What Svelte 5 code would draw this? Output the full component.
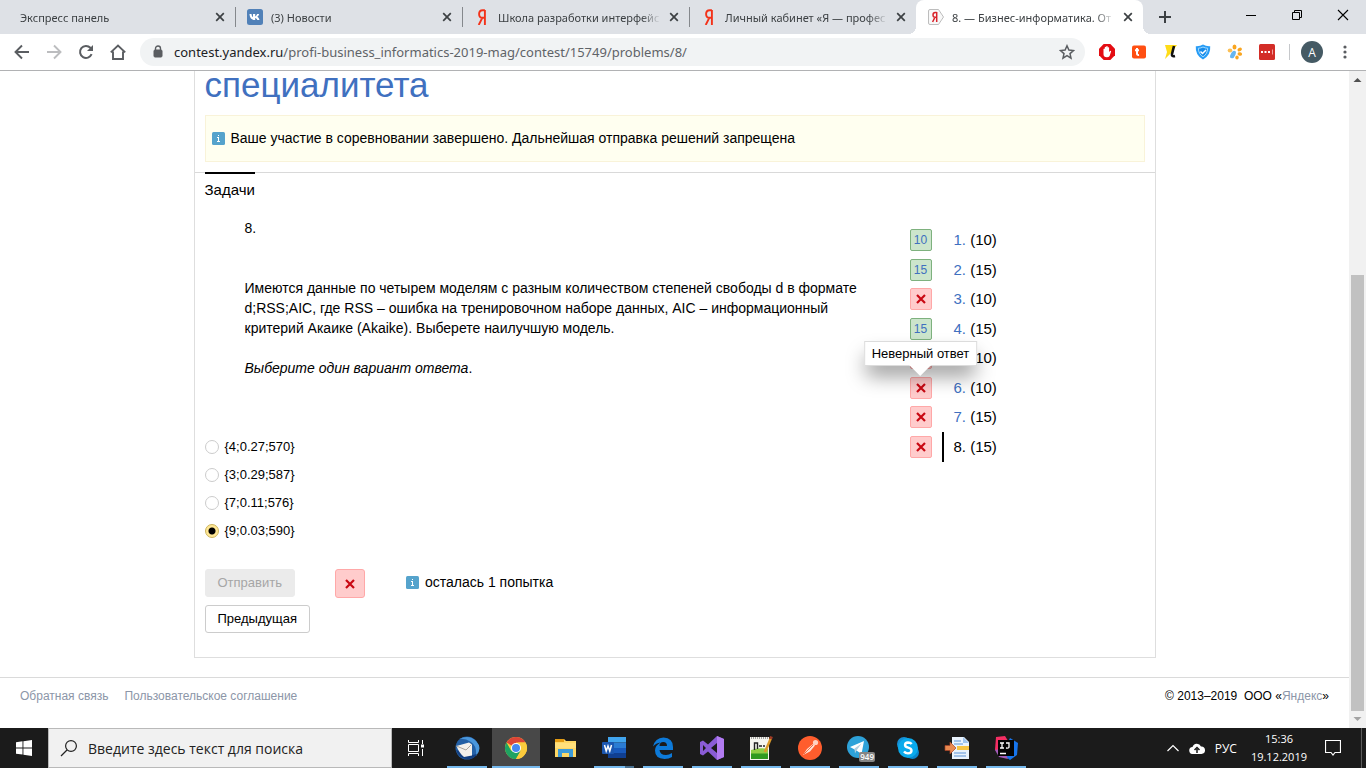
<script>
  const tabs = [
    { title: 'Экспресс панель', icon: null },
    { title: '(3) Новости', icon: 'vk' },
    { title: 'Школа разработки интерфейс', icon: 'ya' },
    { title: 'Личный кабинет «Я — профес', icon: 'ya' },
    { title: '8. — Бизнес-информатика. От', icon: 'contest', active: true }
  ];
  const problems = [
    { n: 1, points: 10, ok: true },
    { n: 2, points: 15, ok: true },
    { n: 3, points: 10, ok: false },
    { n: 4, points: 15, ok: true },
    { n: 5, points: 10, ok: false },
    { n: 6, points: 10, ok: false, tip: 'Неверный ответ' },
    { n: 7, points: 15, ok: false },
    { n: 8, points: 15, ok: false, current: true }
  ];
  const answers = ['{4;0.27;570}', '{3;0.29;587}', '{7;0.11;576}', '{9;0.03;590}'];
  let chosen = $state(3);
  const apps = [
    { id: 'mail', label: 'Thunderbird', open: true },
    { id: 'chrome', label: 'Chrome', open: true, active: true },
    { id: 'files', label: 'Проводник' },
    { id: 'word', label: 'Word', open: true, many: true },
    { id: 'edge', label: 'Edge', open: true },
    { id: 'vs', label: 'Visual Studio', open: true },
    { id: 'npp', label: 'Notepad++', open: true },
    { id: 'postman', label: 'Postman', open: true },
    { id: 'telegram', label: 'Telegram', open: true },
    { id: 'skype', label: 'Skype', open: true },
    { id: 'export', label: 'Импорт', open: true },
    { id: 'idea', label: 'IntelliJ IDEA', open: true }
  ];
</script>

{#snippet cross()}
  <svg class="cross" width="10" height="10" viewBox="0 0 10 10" aria-hidden="true"><path d="M1 1l8 8M9 1L1 9" stroke="#c90813" stroke-width="2.2" /></svg>
{/snippet}

{#snippet info()}
  <svg class="info" width="13" height="13" viewBox="0 0 13 13" aria-hidden="true"><rect width="13" height="13" rx="1.500" fill="#55a3cc" /><path d="M6 3h1v1H6zM5 5h2v4h1v1H5V9h1V6H5z" fill="#fff" /></svg>
{/snippet}

<div class="screen">
  <header>
    <div class="strip">
      {#each tabs as tab}
        <div class="tab" class:active={tab.active}>
          {#if tab.icon === 'vk'}
            <svg width="16" height="16" viewBox="0 0 16 16"><rect width="16" height="16" rx="2.500" fill="#5181b8" /><path d="M2.500 5h2c.2 2 .9 2.800 1.500 3.100V5h2.200v2.400C9 7.200 9.700 6.300 10 5h2.100c-.3 1.400-1.100 2.300-1.800 2.800.8.500 1.700 1.300 2.200 3.200h-2.200c-.4-1.100-1-1.800-2.100-2v2h-.6C4.600 11 2.700 8.800 2.500 5z" fill="#fff" /></svg>
          {:else if tab.icon === 'ya'}
            <svg width="16" height="16" viewBox="0 0 16 16"><path d="M10.900 1v15M10.900 1.200H8.700C6.300 1.200 5.100 2.800 5.100 5s1.200 3.800 3.400 3.800h2.400M8.300 8.800L4.700 16" fill="none" stroke="#f33219" stroke-width="1.900" /></svg>
          {:else if tab.icon === 'contest'}
            <svg width="16" height="16" viewBox="0 0 16 16"><path d="M2 .5h8.500L15.500 8l-5 7.500H2A1.500 1.500 0 0 1 .5 14V2A1.500 1.500 0 0 1 2 .5z" fill="#f8f8f8" stroke="#bdbdbd" /><path d="M8.700 3v10M8.700 3.600H7.300C5.700 3.600 5 4.600 5 5.900c0 1.500.8 2.300 2.100 2.300h1.600M7 8.200L4.600 13" fill="none" stroke="#d9232b" stroke-width="1.500" /></svg>
          {/if}
          <span class="title">{tab.title}</span>
          <button class="bare close" aria-label="Закрыть вкладку"><svg width="10" height="10" viewBox="0 0 10 10"><path d="M1.200 1.200l7.600 7.600M8.800 1.200L1.200 8.800" stroke="#3c4043" stroke-width="1.700" /></svg></button>
        </div>
      {/each}
      <button class="bare plus" aria-label="Новая вкладка"><svg width="14" height="14" viewBox="0 0 14 14"><path d="M7 1v12M1 7h12" stroke="#3c4043" stroke-width="2" /></svg></button>
      <div class="window">
        <button class="bare" aria-label="Свернуть"><svg width="12" height="12" viewBox="0 0 12 12"><path d="M1 6.500h10" stroke="#000" /></svg></button>
        <button class="bare" aria-label="Развернуть"><svg width="12" height="12" viewBox="0 0 12 12"><path d="M1.500 3.500h7v7h-7zM3.500 3.500v-2h7v7h-2" fill="none" stroke="#000" /></svg></button>
        <button class="bare" aria-label="Закрыть"><svg width="12" height="12" viewBox="0 0 12 12"><path d="M1 1l10 10M11 1L1 11" stroke="#000" stroke-width="1.100" /></svg></button>
      </div>
    </div>
    <div class="toolbar">
      <nav class="nav">
        <button class="bare" aria-label="Назад"><svg width="16" height="16" viewBox="0 0 16 16"><path d="M15 8H2M8 1.500L1.500 8 8 14.500" fill="none" stroke="#5a5d61" stroke-width="1.900" /></svg></button>
        <button class="bare" aria-label="Вперёд"><svg width="16" height="16" viewBox="0 0 16 16"><path d="M1 8h13M8 1.500L14.500 8 8 14.500" fill="none" stroke="#bcbdbf" stroke-width="1.900" /></svg></button>
        <button class="bare" aria-label="Обновить"><svg width="16" height="16" viewBox="0 0 16 16"><path d="M13.600 10.200A6 6 0 1 1 12.400 3.800L14 5.500" fill="none" stroke="#5a5d61" stroke-width="2" /><path d="M15 1v6H9z" fill="#5a5d61" /></svg></button>
        <button class="bare" aria-label="Домой"><svg width="16" height="16" viewBox="0 0 16 16"><path d="M.8 8.400L8 1.500l7.200 6.900M3 7.500V15h10V7.500" fill="none" stroke="#5a5d61" stroke-width="1.900" /></svg></button>
      </nav>
      <div class="address">
        <svg width="10" height="14" viewBox="0 0 10 14"><path d="M2.500 6V3.500a2.500 2.500 0 0 1 5 0V6" fill="none" stroke="#5a5d61" stroke-width="1.400" /><rect x="1" y="5" width="8" height="7" rx="1" fill="#5a5d61" stroke="#5a5d61" /></svg>
        <a class="url" href="#top"><b>contest.yandex.ru</b>/profi-business_informatics-2019-mag/contest/15749/problems/8/</a>
        <button class="bare" aria-label="В закладки"><svg width="16" height="16" viewBox="0 0 16 16"><path d="M8 1.800l1.900 4.300 4.600.4-3.500 3.100 1 4.500L8 11.700l-4 2.400 1-4.500-3.500-3.100 4.600-.4z" fill="none" stroke="#5a5d61" stroke-width="1.500" /></svg></button>
      </div>
      <div class="extensions">
        <svg width="16" height="16" viewBox="0 0 16 16"><path d="M4.700 0h6.600L16 4.700v6.600L11.300 16H4.700L0 11.300V4.700z" fill="#e40d13" /><path d="M4.500 8V5q.7-.8 1.300 0V3.200q.8-.8 1.400 0v-.700q.8-.8 1.500 0v1q.8-.7 1.400 0V8l1.200-1.200q1 0 .8.800L10.600 12q-.8 1.300-2.800 1.300-3.300 0-3.300-3z" fill="#fff" /></svg>
        <svg width="16" height="16" viewBox="0 0 16 16"><rect x="1" y="1.500" width="14" height="13" rx="2" fill="#ff4f12" /><path d="M6 4v5.500q0 1.800 2 1.500M4 6.200h4" fill="none" stroke="#fff" stroke-width="2" /></svg>
        <svg width="16" height="16" viewBox="0 0 16 16"><path d="M2 1h12L8 9l-6 6 2-7z" fill="#ffdc17" /><path d="M11 2L9 10q-.500 3 3 2" fill="none" stroke="#111" stroke-width="2.600" /></svg>
        <svg width="16" height="16" viewBox="0 0 16 16"><path d="M8 .5q3 2 7.200 1.700Q16 11 8 15.500 0 11 .8 2.200 5 2.500 8 .5z" fill="#279cf6" /><path d="M8 3q2 1.200 4.600 1.200Q12.500 10 8 12.800 3.500 10 3.400 4.200 6 4.200 8 3z" fill="#178bea" stroke="#a3dcff" /><path d="M5.500 7.500l2 2 3.500-3.500" fill="none" stroke="#fff" stroke-width="1.500" /></svg>
        <svg width="16" height="16" viewBox="0 0 16 16"><g fill="#f9a51f"><ellipse cx="7.500" cy="3" rx="2" ry="2.600" /><ellipse cx="12.700" cy="5.500" rx="2.300" ry="1.800" transform="rotate(-30 12.700 5.500)" /><ellipse cx="12.800" cy="10" rx="2.300" ry="1.700" transform="rotate(15 12.800 10)" /><ellipse cx="10" cy="13.500" rx="1.700" ry="2" /></g><ellipse cx="3" cy="6.500" rx="2.300" ry="1.900" fill="#fbbf54" /><path d="M6 7q3-1 3 1.500T6.500 14Q2.500 15 3 12t3-5z" fill="#66b5ef" /></svg>
        <svg width="16" height="16" viewBox="0 0 16 16"><rect width="16" height="16" rx="1.500" fill="#d32d27" /><path d="M2 7h2v2H2zM5.500 7h2v2h-2zM9 7h2v2H9z" fill="#fff" /><path d="M13.500 5.500v5" stroke="#f2a19e" /></svg>
      </div>
      <span class="rule"></span>
      <button class="bare avatar" aria-label="Профиль">A</button>
      <button class="bare menu" aria-label="Меню"><svg width="4" height="14" viewBox="0 0 4 14" fill="#5a5d61"><circle cx="2" cy="2" r="1.600" /><circle cx="2" cy="7" r="1.600" /><circle cx="2" cy="12" r="1.600" /></svg></button>
    </div>
  </header>

  <div class="view">
    <div class="page">
      <main>
        <h1>специалитета</h1>
        <p class="notice">{@render info()}Ваше участие в соревновании завершено. Дальнейшая отправка решений запрещена</p>
        <nav class="sections"><a href="#tasks">Задачи</a></nav>
        <div class="columns">
          <section class="problem">
            <div class="statement">
              <h2>8.</h2>
              <p>Имеются данные по четырем моделям с разным количеством степеней свободы d в формате d;RSS;AIC, где RSS – ошибка на тренировочном наборе данных, AIC – информационный критерий Акаике (Akaike). Выберете наилучшую модель.</p>
              <p><em>Выберите один вариант ответа</em>.</p>
            </div>
            <form onsubmit={(e) => e.preventDefault()}>
              <div class="answers">
                {#each answers as answer, i}
                  <label><input type="radio" name="answer" value={i} bind:group={chosen} />{answer}</label>
                {/each}
              </div>
              <div class="submit">
                <button class="btn" disabled>Отправить</button>
                <span class="badge bad large">{@render cross()}</span>
                <span class="left">{@render info()}осталась 1 попытка</span>
              </div>
              <button class="btn" type="button">Предыдущая</button>
            </form>
          </section>
          <ul class="tasks">
            {#each problems as p}
              <li class:current={p.current}>
                <span class="badge" class:bad={!p.ok}>
                  {#if p.ok}<a href="#s{p.n}">{p.points}</a>{:else}{@render cross()}{/if}
                  {#if p.tip}<span class="tip" role="tooltip">{p.tip}</span>{/if}
                </span>
                <span class="name">{#if p.current}<span>{p.n}.</span>{:else}<a href="#p{p.n}">{p.n}.</a>{/if} ({p.points})</span>
              </li>
            {/each}
          </ul>
        </div>
      </main>
      <footer>
        <a href="#feedback">Обратная связь</a>
        <a href="#terms">Пользовательское соглашение</a>
        <span class="copy">© 2013–2019&nbsp; ООО «<a href="#ya">Яндекс</a>»</span>
      </footer>
    </div>
    <div class="scroll">
      <svg width="17" height="17" viewBox="0 0 17 17"><path d="M4.500 11h8l-4-4z" fill="#505050" /></svg>
      <div class="track"><div class="thumb"></div></div>
      <svg width="17" height="17" viewBox="0 0 17 17"><path d="M4.500 6h8l-4 4z" fill="#a3a3a3" /></svg>
    </div>
  </div>

  <div class="taskbar">
    <button class="bare start" aria-label="Пуск"><svg width="16" height="16" viewBox="0 0 16 16" fill="#fff"><path d="M0 2.200l6.500-.9v6.200H0zM7.400 1.200L16 0v7.500H7.400zM0 8.400h6.500v6.200L0 13.700zM7.400 8.400H16V16l-8.600-1.200z" /></svg></button>
    <label class="search">
      <svg width="18" height="18" viewBox="0 0 18 18"><circle cx="11" cy="7" r="5.400" fill="none" stroke="#222" stroke-width="1.200" /><path d="M7 11L1 17" stroke="#222" stroke-width="1.300" /></svg>
      <input type="text" aria-label="Поиск" placeholder="Введите здесь текст для поиска" />
    </label>
    <button class="bare start" aria-label="Представление задач"><svg width="18" height="16" viewBox="0 0 18 16"><path d="M1.500 0v2.500h10V0M1.500 16v-2.500h10V16M1.500 4.500h10v7h-10zM15.500 0v4M15.500 9v7" fill="none" stroke="#fff" /><path d="M14 4.500h3v3h-3z" fill="#fff" /></svg></button>
    <div class="apps">
      {#each apps as app}
        <button class="bare app" class:open={app.open} class:active={app.active} class:many={app.many} aria-label={app.label}>
          <svg width="26" height="26" viewBox="0 0 26 26">
            {#if app.id === 'mail'}
              <circle cx="13" cy="13" r="11.500" fill="#2460a5" /><path d="M5 4Q15-1 22 6t0 15q1-10-5-14T5 4z" fill="#4a97dc" /><path d="M2 15q3 9 12 9 7 0 9-5-9 3-12-2z" fill="#123e80" /><path d="M2.500 11L15 7.500l3 2v11l-8 1.500Q5 18 2.500 11z" fill="#f4f1ec" /><path d="M2.500 11l9.500 4 5.500-5.500" fill="none" stroke="#aaa49c" />
            {:else if app.id === 'chrome'}
              <circle cx="13" cy="13" r="11" fill="#fccb3c" /><path d="M13 13L3.470 7.500A11 11 0 0 1 22.530 7.500H13z" fill="#dc4437" /><path d="M3.470 7.500A11 11 0 0 0 13 24l4.760-8.250L8.240 15.750z" fill="#1ea362" /><path d="M22.530 7.500A11 11 0 0 1 13 24l4.760-8.250L15 7.500z" fill="#fccb3c" /><circle cx="13" cy="13" r="5" fill="#fff" /><circle cx="13" cy="13" r="4" fill="#4688f1" />
            {:else if app.id === 'files'}
              <path d="M3 4h9l2 2h10v16H3z" fill="#fdd765" /><path d="M3 4h9v3H3z" fill="#e49b12" /><path d="M3 8h21v5H3z" fill="#ffe07b" /><path d="M6 22v-8h15v8h-4v-4h-7v4z" fill="#3c9bd9" />
            {:else if app.id === 'word'}
              <path d="M7 2h18v5.500H7z" fill="#41a5ee" /><path d="M7 7.500h18V13H7z" fill="#2b7cd3" /><path d="M7 13h18v5H7z" fill="#185abd" /><path d="M7 18h18v5H7z" fill="#103f91" /><rect x="1" y="7" width="12" height="12" rx="1" fill="#1c57b0" /><path d="M3.500 10l1.700 6L7 11l1.800 5 1.700-6" fill="none" stroke="#fff" stroke-width="1.500" />
            {:else if app.id === 'edge'}
              <path d="M3 11.500Q5 3 13.500 2.500 23 3 23 12v3H9.500q.5 5 6.500 5 3 0 6-2v4q-3 2-7.500 2Q5 23.500 5 15.500q0-5 5.500-8Q6 8 3 11.500zM9.500 11H17q0-4-3.700-4T9.500 11z" fill="#0d7ad9" />
            {:else if app.id === 'vs'}
              <path d="M18 1l7 3v18l-7 3L9 16.500 4 20.500 1 19V7l3-1.500 5 4zM4 10v6l3-3zM18 8l-6 5 6 5z" fill="#8a5cd6" fill-rule="evenodd" /><path d="M18 1l7 3v18l-7 3z" fill="#b37cf2" />
            {:else if app.id === 'npp'}
              <path d="M2 2h19v23H2z" fill="#f5f5ef" /><path d="M3 15q8-3 17-1v10H3z" fill="#8fce45" /><path d="M3 18.500h17V24H3z" fill="#2f9a20" /><path d="M3 3h17" stroke="#8a8a8a" stroke-dasharray="1 1" stroke-width="1.500" /><path d="M6.500 15V8h3v6M11 11h3m1 0h2" fill="none" stroke="#222" stroke-width="1.400" /><path d="M23 3L17 17" stroke="#db9a29" stroke-width="2.500" /><path d="M23.500 1.500l-1 2.500" stroke="#9e3b26" stroke-width="3" />
            {:else if app.id === 'postman'}
              <circle cx="13" cy="13" r="12" fill="#ff5d2d" /><path d="M6 20l4-6 6-5 2 1.500-5 6z" fill="#ffe1d6" /><circle cx="18.500" cy="7.500" r="2.600" fill="#ffd2c2" /><path d="M7 19l9-9" stroke="#ed6f48" />
            {:else if app.id === 'telegram'}
              <circle cx="12" cy="12" r="11" fill="#2ea2d9" /><path d="M4 12l14-6-2.500 13-5-3.500z" fill="#fff" /><path d="M8.500 13.500l7-5-5 7-1.500 3z" fill="#b4cfdf" />
            {:else if app.id === 'skype'}
              <circle cx="9" cy="9" r="7" fill="#1590d6" /><circle cx="17.500" cy="17.500" r="6.500" fill="#0a87cd" /><circle cx="13" cy="13" r="10" fill="#0aaaec" /><path d="M16.700 9Q15.500 7.500 13 7.500q-3 .2-3 2.600 0 1.900 3.200 2.600 3.300.8 3.300 3 0 2.500-3.500 2.700-2.500 0-4-1.900" fill="none" stroke="#fff" stroke-width="2.400" />
            {:else if app.id === 'export'}
              <path d="M8 2h12l5 5v17H8z" fill="#e9f3fd" /><path d="M19 2v6h6" fill="#9fc5ee" /><path d="M10 6h7M10 9h9M10 18h12M10 21h12" stroke="#8ab4e3" stroke-width="1.500" /><path d="M13 11h12v4H13z" fill="#f6c443" /><path d="M1 10.500h5V7l6 6-6 6v-3.500H1z" fill="#e98a51" stroke="#a94326" stroke-width=".7" />
            {:else}
              <path d="M3 2l9-1 5 8-7 9-8-3z" fill="#f42e63" /><path d="M17 3l8 5-1 12-7 5-8-6z" fill="#1775ec" /><path d="M2 15l8-2 5 11-9-2z" fill="#a45bb9" /><rect x="5" y="5" width="16" height="16" fill="#050505" /><path d="M7 8h4M9 8v5M7 13h4M13 8h3v4q0 1.500-3 1M7 18.500h6" fill="none" stroke="#fff" stroke-width="1.300" />
            {/if}
          </svg>
          {#if app.id === 'telegram'}<span class="count">949</span>{/if}
        </button>
      {/each}
    </div>
    <div class="tray">
      <svg width="12" height="8" viewBox="0 0 12 8"><path d="M.5 7L6 1.500 11.500 7" fill="none" stroke="#fff" stroke-width="1.200" /></svg>
      <svg width="16" height="11" viewBox="0 0 16 11"><path d="M4 11a3.500 3.500 0 0 1-.5-7 4.500 4.500 0 0 1 8.500-.5A3.700 3.700 0 0 1 12.500 11z" fill="#fff" /><path d="M8 10V6M5.500 7L8 4.500 10.500 7" fill="none" stroke="#1b1b1b" stroke-width="1.500" /></svg>
      <span>РУС</span>
      <time>15:36<br />19.12.2019</time>
      <svg width="16" height="16" viewBox="0 0 16 16"><path d="M.5.500h15v12H10L8 15l-2-2.500H.5z" fill="none" stroke="#fff" stroke-width="1.200" /></svg>
    </div>
    <button class="bare desktop" aria-label="Показать рабочий стол"></button>
  </div>
</div>

<style>
  :global(body) { margin: 0; background: #fff; }
  .screen { min-height: 100vh; display: flex; flex-direction: column; font-family: "Liberation Sans", Arial, sans-serif; color: #000; }
  svg { display: block; flex: none; }
  a { color: #4070bf; text-decoration: none; }
  p, h1, h2, ul { margin: 0; padding: 0; font-weight: normal; }
  .bare { border: 0; padding: 0; background: none; font: inherit; color: inherit; display: flex; align-items: center; justify-content: center; }

  header, .taskbar { font-family: "Open Sans", "Noto Sans", sans-serif; }
  header { border-bottom: 1px solid #b1b2b4; }
  .strip { display: flex; height: 34px; background: #dee1e6; padding-left: 8px; }
  .tab { position: relative; box-sizing: border-box; flex: 0 1 227px; min-width: 0; display: flex; align-items: center; gap: 8px; padding: 0 10px 0 12px; font-family: "Noto Sans", sans-serif; font-size: 11px; color: #3c4043; }
  .tab:not(.active):not(:first-child) { background: linear-gradient(#85888c, #85888c) left center / 1px 20px no-repeat; }
  .tab.active { background: #fff; border-radius: 8px 8px 0 0; }
  .tab.active::before, .tab.active::after { content: ""; position: absolute; bottom: 0; width: 8px; height: 8px; }
  .tab.active::before { right: 100%; background: radial-gradient(circle at 0 0, transparent 8px, #fff 8px); }
  .tab.active::after { left: 100%; background: radial-gradient(circle at 100% 0, transparent 8px, #fff 8px); }
  .title { flex: 1; overflow: hidden; white-space: nowrap; -webkit-mask-image: linear-gradient(90deg, #000 calc(100% - 20px), transparent); mask-image: linear-gradient(90deg, #000 calc(100% - 20px), transparent); }
  .plus { padding-left: 15px; }
  .window { display: flex; margin-left: auto; height: 29px; }
  .window button { width: 46px; }
  .toolbar { display: flex; align-items: center; height: 36px; padding: 0 19px 0 14px; }
  .nav { display: flex; gap: 16px; }
  .address { flex: 1; min-width: 0; height: 28px; margin-left: 14px; box-sizing: border-box; padding: 0 10px 0 13px; display: flex; align-items: center; gap: 11px; border-radius: 14px; background: #f1f3f4; }
  .url { flex: 1; overflow: hidden; white-space: nowrap; font-family: "Noto Sans", sans-serif; font-size: 13px; color: #5f6368; }
  .url b { font-weight: normal; color: #202124; }
  .extensions { display: flex; gap: 16px; margin-left: 14px; }
  .rule { width: 1px; height: 16px; background: #c6c8cb; margin: 0 11px 0 14px; }
  .avatar { width: 22px; height: 22px; border-radius: 50%; background: #455a64; color: #fff; font-size: 12px; }
  .menu { margin-left: 20px; }

  .view { flex: 1; display: flex; }
  .page { flex: 1; min-width: 0; }
  main { box-sizing: border-box; max-width: 962px; margin: 0 auto; padding-bottom: 24px; border: solid #dedede; border-width: 0 1px 1px; }
  h1 { padding: 0 10px; font-size: 35px; line-height: 28px; color: #4070bf; }
  .notice { display: flex; align-items: center; gap: 6px; margin: 16px 10px 10px; padding: 12px 6px; border: 1px solid #f9f3d9; background: #fffff0; font-size: 14px; line-height: 21px; }
  .sections { display: flex; padding: 0 10px; border-top: 1px solid #d9d9d9; font-size: 15px; line-height: 20px; }
  .sections a { color: #000; border-top: 2px solid #000; margin-top: -1px; padding-top: 6px; }
  .columns { display: grid; grid-template-columns: minmax(0, 1fr) 235px; padding: 18px 10px 0; }
  .statement { padding: 0 40px; font-size: 14px; line-height: 20px; }
  h2 { font-size: 14px; }
  .statement h2 + p { margin-top: 40px; }
  .statement p + p { margin-top: 20px; }
  .answers { display: grid; justify-items: start; margin: 55px 0 24px; }
  label { display: flex; align-items: center; }
  .answers label { gap: 6px; font-size: 13px; line-height: 28px; }
  input[type="radio"] { appearance: none; box-sizing: border-box; width: 14px; height: 14px; margin: 0; border: 1px solid #ccc; border-radius: 50%; background: #fff; }
  input[type="radio"]:checked { border-color: #ccb35a; background: radial-gradient(circle, #000 3px, #ffe795 4px); }
  .submit { display: flex; margin-bottom: 7px; }
  .btn { box-sizing: border-box; height: 28px; padding: 0 12px 1px; border: 1px solid #ccc; border-radius: 3px; background: #fff; color: #000; font: 13px "Liberation Sans", Arial, sans-serif; }
  .btn:disabled { border-color: #ebebeb; background: #ebebeb; color: #a6a6a6; }
  .badge { position: relative; box-sizing: border-box; width: 22px; height: 22px; display: flex; align-items: center; justify-content: center; border: 1px solid #7eb17e; border-radius: 2px; background: #cce5cc; font-size: 12px; }
  .bad { border-color: #ffa8a8; background: #fcc; }
  .large { width: 30px; height: 29px; border-radius: 3px; margin: 0 41px 0 40px; }
  .left { display: flex; align-items: center; gap: 6px; font-size: 14px; line-height: 26px; height: 26px; }

  .tasks { list-style: none; padding-top: 11px; font-size: 15px; line-height: 22px; }
  li { display: flex; align-items: center; height: 22px; margin-bottom: 7px; }
  li:nth-child(odd) { margin-bottom: 8px; }
  .name { margin-left: 10px; padding-left: 12px; }
  .current .name { padding-left: 10px; border-left: 2px solid #000; line-height: 30px; }
  .tip { position: absolute; left: 50%; bottom: 32px; transform: translateX(-50%); z-index: 2; padding: 0 7px; border: 1px solid #dcdcdc; background: #fff; box-shadow: 0 12px 20px -2px rgba(0, 0, 0, .4); font-size: 13px; line-height: 23px; white-space: nowrap; }
  .tip::after { content: ""; position: absolute; top: 100%; left: 50%; margin-left: -11px; border: 11px solid transparent; border-top-color: #fff; border-bottom: 0; }

  footer { display: flex; gap: 16px; margin-top: 19px; padding: 8px 20px 22px; border-top: 1px solid #dadada; font-size: 12px; line-height: 20px; }
  footer a { color: #8c96a8; }
  .copy { margin-left: auto; }
  .scroll { width: 17px; display: flex; flex-direction: column; background: #f1f1f1; }
  .track { flex: 1; display: flex; flex-direction: column; justify-content: flex-end; padding: 0 2px; }
  .thumb { flex: 0 0 70%; background: #c1c1c1; }

  .taskbar { display: flex; height: 40px; background: #1b1b1b; color: #fff; }
  .start { width: 48px; }
  .search { box-sizing: border-box; flex: 0 1 344px; gap: 10px; padding: 0 11px; border: 1px solid #b9b9b9; background: #f1f1f1; }
  .search input { flex: 1; min-width: 0; padding: 0; border: 0; background: none; font: 14px "Open Sans", "Noto Sans", sans-serif; outline: 0; }
  .search input::placeholder { color: #222; opacity: 1; }
  .apps { display: flex; gap: 1px; padding-left: 3px; }
  .app { position: relative; width: 48px; }
  .open::after { content: ""; position: absolute; bottom: 0; left: 4px; right: 4px; height: 2px; background: #76b9ed; }
  .active.app { background: #484848; }
  .active.app::after { left: 0; right: 0; }
  .many::after { background: linear-gradient(90deg, #76b9ed 31px, #49708f 31px); }
  .count { position: absolute; right: 8px; bottom: 6px; padding: 0 1px; border-radius: 2px; background: #858585; font-size: 8px; line-height: 10px; font-weight: 600; }
  .tray { display: flex; align-items: center; margin-left: auto; gap: 10px; padding-right: 20px; font-size: 12px; }
  .tray time { margin: 0 8px 0 4px; text-align: center; line-height: 18px; font-size: 11px; }
  .desktop { width: 5px; border-left: 1px solid #5b5b5b; }
</style>
